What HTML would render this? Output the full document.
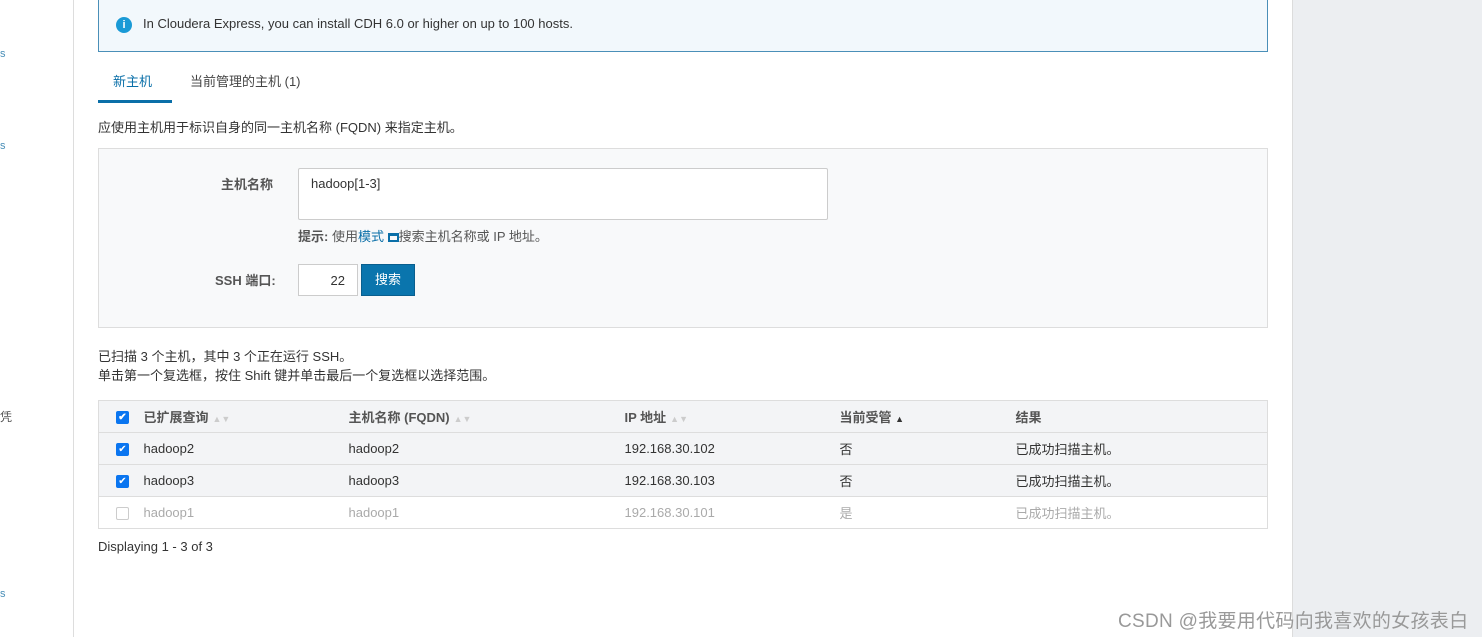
<!DOCTYPE html>
<html><head><meta charset="utf-8"><style>
*{box-sizing:border-box;margin:0;padding:0}
body{width:1482px;height:637px;overflow:hidden;background:#fff;font-family:"Liberation Sans","Noto Sans CJK SC",sans-serif;font-size:13px;color:#333;position:relative}
.abs{position:absolute}
.side{left:0;top:0;width:74px;height:637px;border-right:1px solid #ddd;background:#fff}
.right{left:1292px;top:0;width:190px;height:637px;background:#eceef1;border-left:1px solid #dcdcdc}
.alert{left:98px;top:-2px;width:1170px;height:54px;background:#f2f8fc;border:1px solid #4a8fb8;border-top:none}
.tab{top:71px;font-size:13px}
.form{left:98px;top:148px;width:1170px;height:180px;background:#f8f9fa;border:1px solid #ddd}
table{position:absolute;left:98px;top:400px;width:1170px;border-collapse:collapse;border:1px solid #ddd}
td,th{height:32px;text-align:left;font-size:13px;padding:0;border-top:1px solid #ddd}
th{background:#f3f4f6;font-weight:bold;color:#555}
.cb{display:inline-block;width:13px;height:13px;border-radius:2px;background:#0a75f0;color:#fff;font-size:10px;line-height:13px;text-align:center;margin-left:17px;vertical-align:middle}
.cb.off{background:#fff;border:1px solid #ccc}
tr.g td{background:#f3f4f6}
tr.dim td{color:#aaa}
.s{color:#ccc;font-size:9px;margin-left:4px}
</style></head><body>
<div class="abs side"></div>
<div class="abs" style="left:0;top:48px;font-size:11px;color:#4a8fb8">s</div>
<div class="abs" style="left:0;top:140px;font-size:11px;color:#4a8fb8">s</div>
<div class="abs" style="left:0;top:408px;font-size:12px;color:#555">凭</div>
<div class="abs" style="left:0;top:588px;font-size:11px;color:#4a8fb8">s</div>
<div class="abs right"></div>
<div class="abs alert"><div class="abs" style="left:17px;top:19px;width:16px;height:16px;border-radius:50%;background:#1a9ad6;color:#fff;font-size:11px;font-weight:bold;text-align:center;line-height:16px">i</div><div class="abs" style="left:44px;top:18px;font-size:13px;color:#333">In Cloudera Express, you can install CDH 6.0 or higher on up to 100 hosts.</div></div>
<div class="abs tab" style="left:113px;color:#0a6fa8">新主机</div>
<div class="abs" style="left:98px;top:100px;width:74px;height:3px;background:#0a6fa8"></div>
<div class="abs tab" style="left:190px;color:#444">当前管理的主机 (1)</div>
<div class="abs" style="left:98px;top:117px">应使用主机用于标识自身的同一主机名称 (FQDN) 来指定主机。</div>
<div class="abs form"></div>
<div class="abs" style="left:221px;top:174px;font-weight:bold;color:#555">主机名称</div>
<div class="abs" style="left:298px;top:168px;width:530px;height:52px;background:#fff;border:1px solid #ccc;border-radius:2px;padding:7px 12px">hadoop[1-3]</div>
<div class="abs" style="left:298px;top:226px;color:#555"><b>提示:</b> 使用<span style="color:#0a6fa8">模式 </span><span style="display:inline-block;width:11px;height:9px;border:2px solid #0a6fa8;border-top-width:3px;vertical-align:-1px"></span>搜索主机名称或 IP 地址。</div>
<div class="abs" style="left:215px;top:270px;font-weight:bold;color:#555">SSH 端口:</div>
<div class="abs" style="left:298px;top:264px;width:60px;height:32px;background:#fff;border:1px solid #ccc;text-align:right;padding:8px 12px 0 0">22</div>
<div class="abs" style="left:361px;top:264px;width:54px;height:32px;background:#0a75ad;border:1px solid #0a5f8e;color:#fff;text-align:center;line-height:30px">搜索</div>
<div class="abs" style="left:98px;top:347px;line-height:19px">已扫描 3 个主机，其中 3 个正在运行 SSH。<br>单击第一个复选框，按住 Shift 键并单击最后一个复选框以选择范围。</div>
<table>
<tr><th style="width:45px"><span class="cb">✔</span></th><th style="width:205px">已扩展查询<span class="s">▲▼</span></th><th style="width:276px">主机名称 (FQDN)<span class="s">▲▼</span></th><th style="width:215px">IP 地址<span class="s">▲▼</span></th><th style="width:176px">当前受管 <span style="font-size:9px;color:#333">▲</span></th><th>结果</th></tr>
<tr class="g"><td><span class="cb">✔</span></td><td>hadoop2</td><td>hadoop2</td><td>192.168.30.102</td><td>否</td><td>已成功扫描主机。</td></tr>
<tr class="g"><td><span class="cb">✔</span></td><td>hadoop3</td><td>hadoop3</td><td>192.168.30.103</td><td>否</td><td>已成功扫描主机。</td></tr>
<tr class="dim"><td><span class="cb off"></span></td><td>hadoop1</td><td>hadoop1</td><td>192.168.30.101</td><td>是</td><td>已成功扫描主机。</td></tr>
</table>
<div class="abs" style="left:98px;top:539px">Displaying 1 - 3 of 3</div>
<div class="abs" style="left:1118px;top:606px;font-size:19px;color:#999;letter-spacing:0.3px">CSDN @我要用代码向我喜欢的女孩表白</div>
</body></html>
